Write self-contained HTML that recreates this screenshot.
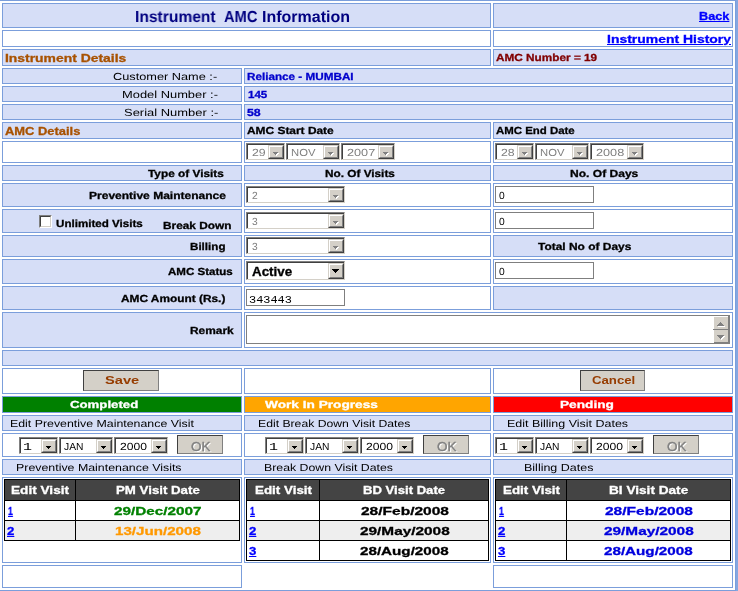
<!DOCTYPE html>
<html><head><meta charset="utf-8"><style>
html,body{margin:0;padding:0;background:#fff}
body{width:738px;height:591px;overflow:hidden;position:relative;font-family:"Liberation Sans",sans-serif}
.a{position:absolute;box-sizing:border-box}
.t{position:absolute;white-space:nowrap;line-height:0;height:0;transform-origin:0 0;will-change:transform}
.t span{display:inline-block;line-height:0}
</style></head><body>
<div class="a" style="left:0;top:0;width:738px;height:1px;background:#7b9edb"></div>
<div class="a" style="left:0;top:590px;width:738px;height:1px;background:#7b9edb"></div>
<div class="a" style="left:735px;top:0;width:1px;height:591px;background:#7b9edb"></div>
<div class="a" style="left:736px;top:0;width:2px;height:591px;background:#85a7e1"></div>
<div class="a" style="left:2px;top:3px;width:489px;height:25px;background:#d6def7;border:1px solid #7b9edb"></div>
<div class="a" style="left:493px;top:3px;width:240px;height:25px;background:#d6def7;border:1px solid #7b9edb"></div>
<div class="a" style="left:2px;top:30px;width:489px;height:17px;background:#ffffff;border:1px solid #7b9edb"></div>
<div class="a" style="left:493px;top:30px;width:240px;height:17px;background:#ffffff;border:1px solid #7b9edb"></div>
<div class="a" style="left:2px;top:49px;width:489px;height:17px;background:#d6def7;border:1px solid #7b9edb"></div>
<div class="a" style="left:493px;top:49px;width:240px;height:17px;background:#d6def7;border:1px solid #7b9edb"></div>
<div class="a" style="left:2px;top:68px;width:240px;height:16px;background:#d6def7;border:1px solid #7b9edb"></div>
<div class="a" style="left:244px;top:68px;width:489px;height:16px;background:#d6def7;border:1px solid #7b9edb"></div>
<div class="a" style="left:2px;top:86px;width:240px;height:16px;background:#d6def7;border:1px solid #7b9edb"></div>
<div class="a" style="left:244px;top:86px;width:489px;height:16px;background:#d6def7;border:1px solid #7b9edb"></div>
<div class="a" style="left:2px;top:104px;width:240px;height:16px;background:#d6def7;border:1px solid #7b9edb"></div>
<div class="a" style="left:244px;top:104px;width:489px;height:16px;background:#d6def7;border:1px solid #7b9edb"></div>
<div class="a" style="left:2px;top:122px;width:240px;height:17px;background:#d6def7;border:1px solid #7b9edb"></div>
<div class="a" style="left:244px;top:122px;width:247px;height:17px;background:#d6def7;border:1px solid #7b9edb"></div>
<div class="a" style="left:493px;top:122px;width:240px;height:17px;background:#d6def7;border:1px solid #7b9edb"></div>
<div class="a" style="left:2px;top:141px;width:240px;height:22px;background:#ffffff;border:1px solid #7b9edb"></div>
<div class="a" style="left:244px;top:141px;width:247px;height:22px;background:#ffffff;border:1px solid #7b9edb"></div>
<div class="a" style="left:493px;top:141px;width:240px;height:22px;background:#ffffff;border:1px solid #7b9edb"></div>
<div class="a" style="left:2px;top:165px;width:240px;height:16px;background:#d6def7;border:1px solid #7b9edb"></div>
<div class="a" style="left:244px;top:165px;width:247px;height:16px;background:#d6def7;border:1px solid #7b9edb"></div>
<div class="a" style="left:493px;top:165px;width:240px;height:16px;background:#d6def7;border:1px solid #7b9edb"></div>
<div class="a" style="left:2px;top:183px;width:240px;height:24px;background:#d6def7;border:1px solid #7b9edb"></div>
<div class="a" style="left:244px;top:183px;width:247px;height:24px;background:#ffffff;border:1px solid #7b9edb"></div>
<div class="a" style="left:493px;top:183px;width:240px;height:24px;background:#ffffff;border:1px solid #7b9edb"></div>
<div class="a" style="left:2px;top:209px;width:240px;height:24px;background:#d6def7;border:1px solid #7b9edb"></div>
<div class="a" style="left:244px;top:209px;width:247px;height:24px;background:#ffffff;border:1px solid #7b9edb"></div>
<div class="a" style="left:493px;top:209px;width:240px;height:24px;background:#ffffff;border:1px solid #7b9edb"></div>
<div class="a" style="left:2px;top:235px;width:240px;height:22px;background:#d6def7;border:1px solid #7b9edb"></div>
<div class="a" style="left:244px;top:235px;width:247px;height:22px;background:#ffffff;border:1px solid #7b9edb"></div>
<div class="a" style="left:493px;top:235px;width:240px;height:22px;background:#d6def7;border:1px solid #7b9edb"></div>
<div class="a" style="left:2px;top:259px;width:240px;height:25px;background:#d6def7;border:1px solid #7b9edb"></div>
<div class="a" style="left:244px;top:259px;width:247px;height:25px;background:#ffffff;border:1px solid #7b9edb"></div>
<div class="a" style="left:493px;top:259px;width:240px;height:25px;background:#ffffff;border:1px solid #7b9edb"></div>
<div class="a" style="left:2px;top:286px;width:240px;height:24px;background:#d6def7;border:1px solid #7b9edb"></div>
<div class="a" style="left:244px;top:286px;width:247px;height:24px;background:#ffffff;border:1px solid #7b9edb"></div>
<div class="a" style="left:493px;top:286px;width:240px;height:24px;background:#d6def7;border:1px solid #7b9edb"></div>
<div class="a" style="left:2px;top:312px;width:240px;height:36px;background:#d6def7;border:1px solid #7b9edb"></div>
<div class="a" style="left:244px;top:312px;width:489px;height:36px;background:#ffffff;border:1px solid #7b9edb"></div>
<div class="a" style="left:2px;top:350px;width:731px;height:16px;background:#d6def7;border:1px solid #7b9edb"></div>
<div class="a" style="left:2px;top:368px;width:240px;height:26px;background:#ffffff;border:1px solid #7b9edb"></div>
<div class="a" style="left:244px;top:368px;width:247px;height:26px;background:#ffffff;border:1px solid #7b9edb"></div>
<div class="a" style="left:493px;top:368px;width:240px;height:26px;background:#ffffff;border:1px solid #7b9edb"></div>
<div class="a" style="left:2px;top:396px;width:240px;height:17px;background:#008000;border:1px solid #7b9edb"></div>
<div class="a" style="left:244px;top:396px;width:247px;height:17px;background:#ffa500;border:1px solid #7b9edb"></div>
<div class="a" style="left:493px;top:396px;width:240px;height:17px;background:#ff0000;border:1px solid #7b9edb"></div>
<div class="a" style="left:2px;top:415px;width:240px;height:16px;background:#d6def7;border:1px solid #7b9edb"></div>
<div class="a" style="left:244px;top:415px;width:247px;height:16px;background:#d6def7;border:1px solid #7b9edb"></div>
<div class="a" style="left:493px;top:415px;width:240px;height:16px;background:#d6def7;border:1px solid #7b9edb"></div>
<div class="a" style="left:2px;top:433px;width:240px;height:24px;background:#ffffff;border:1px solid #7b9edb"></div>
<div class="a" style="left:244px;top:433px;width:247px;height:24px;background:#ffffff;border:1px solid #7b9edb"></div>
<div class="a" style="left:493px;top:433px;width:240px;height:24px;background:#ffffff;border:1px solid #7b9edb"></div>
<div class="a" style="left:2px;top:459px;width:240px;height:16px;background:#d6def7;border:1px solid #7b9edb"></div>
<div class="a" style="left:244px;top:459px;width:247px;height:16px;background:#d6def7;border:1px solid #7b9edb"></div>
<div class="a" style="left:493px;top:459px;width:240px;height:16px;background:#d6def7;border:1px solid #7b9edb"></div>
<div class="a" style="left:2px;top:477px;width:240px;height:86px;background:#ffffff;border:1px solid #7b9edb"></div>
<div class="a" style="left:244px;top:477px;width:247px;height:86px;background:#ffffff;border:1px solid #7b9edb"></div>
<div class="a" style="left:493px;top:477px;width:240px;height:86px;background:#ffffff;border:1px solid #7b9edb"></div>
<div class="a" style="left:2px;top:565px;width:240px;height:23px;background:#ffffff;border:1px solid #7b9edb"></div>
<div class="a" style="left:493px;top:565px;width:240px;height:23px;background:#ffffff;border:1px solid #7b9edb"></div>
<div class="a" style="left:246px;top:143px;width:39px;height:17px;background:#fff;border-top:1px solid #808080;border-left:1px solid #808080;border-right:1px solid #d4d0c8;border-bottom:1px solid #d4d0c8"></div>
<div class="a" style="left:247px;top:144px;width:37px;height:15px;border-top:1px solid #404040;border-left:1px solid #404040"></div>
<div class="a" style="left:268px;top:145px;width:16px;height:14px;background:#d4d0c8;border-top:1px solid #d4d0c8;border-left:1px solid #d4d0c8;border-right:1px solid #404040;border-bottom:1px solid #404040"></div>
<div class="a" style="left:269px;top:146px;width:14px;height:12px;border-top:1px solid #fff;border-left:1px solid #fff;border-right:1px solid #808080;border-bottom:1px solid #808080"></div>
<div class="a" style="left:274px;top:153px;width:5px;height:1px;background:#fff"></div>
<div class="a" style="left:275px;top:154px;width:3px;height:1px;background:#fff"></div>
<div class="a" style="left:276px;top:155px;width:1px;height:1px;background:#fff"></div>
<div class="a" style="left:273px;top:152px;width:5px;height:1px;background:#808080"></div>
<div class="a" style="left:274px;top:153px;width:3px;height:1px;background:#808080"></div>
<div class="a" style="left:275px;top:154px;width:1px;height:1px;background:#808080"></div>
<div class="a" style="left:286px;top:143px;width:54px;height:17px;background:#fff;border-top:1px solid #808080;border-left:1px solid #808080;border-right:1px solid #d4d0c8;border-bottom:1px solid #d4d0c8"></div>
<div class="a" style="left:287px;top:144px;width:52px;height:15px;border-top:1px solid #404040;border-left:1px solid #404040"></div>
<div class="a" style="left:323px;top:145px;width:16px;height:14px;background:#d4d0c8;border-top:1px solid #d4d0c8;border-left:1px solid #d4d0c8;border-right:1px solid #404040;border-bottom:1px solid #404040"></div>
<div class="a" style="left:324px;top:146px;width:14px;height:12px;border-top:1px solid #fff;border-left:1px solid #fff;border-right:1px solid #808080;border-bottom:1px solid #808080"></div>
<div class="a" style="left:329px;top:153px;width:5px;height:1px;background:#fff"></div>
<div class="a" style="left:330px;top:154px;width:3px;height:1px;background:#fff"></div>
<div class="a" style="left:331px;top:155px;width:1px;height:1px;background:#fff"></div>
<div class="a" style="left:328px;top:152px;width:5px;height:1px;background:#808080"></div>
<div class="a" style="left:329px;top:153px;width:3px;height:1px;background:#808080"></div>
<div class="a" style="left:330px;top:154px;width:1px;height:1px;background:#808080"></div>
<div class="a" style="left:341px;top:143px;width:54px;height:17px;background:#fff;border-top:1px solid #808080;border-left:1px solid #808080;border-right:1px solid #d4d0c8;border-bottom:1px solid #d4d0c8"></div>
<div class="a" style="left:342px;top:144px;width:52px;height:15px;border-top:1px solid #404040;border-left:1px solid #404040"></div>
<div class="a" style="left:378px;top:145px;width:16px;height:14px;background:#d4d0c8;border-top:1px solid #d4d0c8;border-left:1px solid #d4d0c8;border-right:1px solid #404040;border-bottom:1px solid #404040"></div>
<div class="a" style="left:379px;top:146px;width:14px;height:12px;border-top:1px solid #fff;border-left:1px solid #fff;border-right:1px solid #808080;border-bottom:1px solid #808080"></div>
<div class="a" style="left:384px;top:153px;width:5px;height:1px;background:#fff"></div>
<div class="a" style="left:385px;top:154px;width:3px;height:1px;background:#fff"></div>
<div class="a" style="left:386px;top:155px;width:1px;height:1px;background:#fff"></div>
<div class="a" style="left:383px;top:152px;width:5px;height:1px;background:#808080"></div>
<div class="a" style="left:384px;top:153px;width:3px;height:1px;background:#808080"></div>
<div class="a" style="left:385px;top:154px;width:1px;height:1px;background:#808080"></div>
<div class="a" style="left:495px;top:143px;width:39px;height:17px;background:#fff;border-top:1px solid #808080;border-left:1px solid #808080;border-right:1px solid #d4d0c8;border-bottom:1px solid #d4d0c8"></div>
<div class="a" style="left:496px;top:144px;width:37px;height:15px;border-top:1px solid #404040;border-left:1px solid #404040"></div>
<div class="a" style="left:517px;top:145px;width:16px;height:14px;background:#d4d0c8;border-top:1px solid #d4d0c8;border-left:1px solid #d4d0c8;border-right:1px solid #404040;border-bottom:1px solid #404040"></div>
<div class="a" style="left:518px;top:146px;width:14px;height:12px;border-top:1px solid #fff;border-left:1px solid #fff;border-right:1px solid #808080;border-bottom:1px solid #808080"></div>
<div class="a" style="left:523px;top:153px;width:5px;height:1px;background:#fff"></div>
<div class="a" style="left:524px;top:154px;width:3px;height:1px;background:#fff"></div>
<div class="a" style="left:525px;top:155px;width:1px;height:1px;background:#fff"></div>
<div class="a" style="left:522px;top:152px;width:5px;height:1px;background:#808080"></div>
<div class="a" style="left:523px;top:153px;width:3px;height:1px;background:#808080"></div>
<div class="a" style="left:524px;top:154px;width:1px;height:1px;background:#808080"></div>
<div class="a" style="left:535px;top:143px;width:54px;height:17px;background:#fff;border-top:1px solid #808080;border-left:1px solid #808080;border-right:1px solid #d4d0c8;border-bottom:1px solid #d4d0c8"></div>
<div class="a" style="left:536px;top:144px;width:52px;height:15px;border-top:1px solid #404040;border-left:1px solid #404040"></div>
<div class="a" style="left:572px;top:145px;width:16px;height:14px;background:#d4d0c8;border-top:1px solid #d4d0c8;border-left:1px solid #d4d0c8;border-right:1px solid #404040;border-bottom:1px solid #404040"></div>
<div class="a" style="left:573px;top:146px;width:14px;height:12px;border-top:1px solid #fff;border-left:1px solid #fff;border-right:1px solid #808080;border-bottom:1px solid #808080"></div>
<div class="a" style="left:578px;top:153px;width:5px;height:1px;background:#fff"></div>
<div class="a" style="left:579px;top:154px;width:3px;height:1px;background:#fff"></div>
<div class="a" style="left:580px;top:155px;width:1px;height:1px;background:#fff"></div>
<div class="a" style="left:577px;top:152px;width:5px;height:1px;background:#808080"></div>
<div class="a" style="left:578px;top:153px;width:3px;height:1px;background:#808080"></div>
<div class="a" style="left:579px;top:154px;width:1px;height:1px;background:#808080"></div>
<div class="a" style="left:590px;top:143px;width:54px;height:17px;background:#fff;border-top:1px solid #808080;border-left:1px solid #808080;border-right:1px solid #d4d0c8;border-bottom:1px solid #d4d0c8"></div>
<div class="a" style="left:591px;top:144px;width:52px;height:15px;border-top:1px solid #404040;border-left:1px solid #404040"></div>
<div class="a" style="left:627px;top:145px;width:16px;height:14px;background:#d4d0c8;border-top:1px solid #d4d0c8;border-left:1px solid #d4d0c8;border-right:1px solid #404040;border-bottom:1px solid #404040"></div>
<div class="a" style="left:628px;top:146px;width:14px;height:12px;border-top:1px solid #fff;border-left:1px solid #fff;border-right:1px solid #808080;border-bottom:1px solid #808080"></div>
<div class="a" style="left:633px;top:153px;width:5px;height:1px;background:#fff"></div>
<div class="a" style="left:634px;top:154px;width:3px;height:1px;background:#fff"></div>
<div class="a" style="left:635px;top:155px;width:1px;height:1px;background:#fff"></div>
<div class="a" style="left:632px;top:152px;width:5px;height:1px;background:#808080"></div>
<div class="a" style="left:633px;top:153px;width:3px;height:1px;background:#808080"></div>
<div class="a" style="left:634px;top:154px;width:1px;height:1px;background:#808080"></div>
<div class="a" style="left:246px;top:186px;width:99px;height:17px;background:#fff;border-top:1px solid #808080;border-left:1px solid #808080;border-right:1px solid #d4d0c8;border-bottom:1px solid #d4d0c8"></div>
<div class="a" style="left:247px;top:187px;width:97px;height:15px;border-top:1px solid #404040;border-left:1px solid #404040"></div>
<div class="a" style="left:328px;top:188px;width:16px;height:14px;background:#d4d0c8;border-top:1px solid #d4d0c8;border-left:1px solid #d4d0c8;border-right:1px solid #404040;border-bottom:1px solid #404040"></div>
<div class="a" style="left:329px;top:189px;width:14px;height:12px;border-top:1px solid #fff;border-left:1px solid #fff;border-right:1px solid #808080;border-bottom:1px solid #808080"></div>
<div class="a" style="left:334px;top:196px;width:5px;height:1px;background:#fff"></div>
<div class="a" style="left:335px;top:197px;width:3px;height:1px;background:#fff"></div>
<div class="a" style="left:336px;top:198px;width:1px;height:1px;background:#fff"></div>
<div class="a" style="left:333px;top:195px;width:5px;height:1px;background:#808080"></div>
<div class="a" style="left:334px;top:196px;width:3px;height:1px;background:#808080"></div>
<div class="a" style="left:335px;top:197px;width:1px;height:1px;background:#808080"></div>
<div class="a" style="left:246px;top:212px;width:99px;height:17px;background:#fff;border-top:1px solid #808080;border-left:1px solid #808080;border-right:1px solid #d4d0c8;border-bottom:1px solid #d4d0c8"></div>
<div class="a" style="left:247px;top:213px;width:97px;height:15px;border-top:1px solid #404040;border-left:1px solid #404040"></div>
<div class="a" style="left:328px;top:214px;width:16px;height:14px;background:#d4d0c8;border-top:1px solid #d4d0c8;border-left:1px solid #d4d0c8;border-right:1px solid #404040;border-bottom:1px solid #404040"></div>
<div class="a" style="left:329px;top:215px;width:14px;height:12px;border-top:1px solid #fff;border-left:1px solid #fff;border-right:1px solid #808080;border-bottom:1px solid #808080"></div>
<div class="a" style="left:334px;top:222px;width:5px;height:1px;background:#fff"></div>
<div class="a" style="left:335px;top:223px;width:3px;height:1px;background:#fff"></div>
<div class="a" style="left:336px;top:224px;width:1px;height:1px;background:#fff"></div>
<div class="a" style="left:333px;top:221px;width:5px;height:1px;background:#808080"></div>
<div class="a" style="left:334px;top:222px;width:3px;height:1px;background:#808080"></div>
<div class="a" style="left:335px;top:223px;width:1px;height:1px;background:#808080"></div>
<div class="a" style="left:246px;top:237px;width:99px;height:17px;background:#fff;border-top:1px solid #808080;border-left:1px solid #808080;border-right:1px solid #d4d0c8;border-bottom:1px solid #d4d0c8"></div>
<div class="a" style="left:247px;top:238px;width:97px;height:15px;border-top:1px solid #404040;border-left:1px solid #404040"></div>
<div class="a" style="left:328px;top:239px;width:16px;height:14px;background:#d4d0c8;border-top:1px solid #d4d0c8;border-left:1px solid #d4d0c8;border-right:1px solid #404040;border-bottom:1px solid #404040"></div>
<div class="a" style="left:329px;top:240px;width:14px;height:12px;border-top:1px solid #fff;border-left:1px solid #fff;border-right:1px solid #808080;border-bottom:1px solid #808080"></div>
<div class="a" style="left:334px;top:247px;width:5px;height:1px;background:#fff"></div>
<div class="a" style="left:335px;top:248px;width:3px;height:1px;background:#fff"></div>
<div class="a" style="left:336px;top:249px;width:1px;height:1px;background:#fff"></div>
<div class="a" style="left:333px;top:246px;width:5px;height:1px;background:#808080"></div>
<div class="a" style="left:334px;top:247px;width:3px;height:1px;background:#808080"></div>
<div class="a" style="left:335px;top:248px;width:1px;height:1px;background:#808080"></div>
<div class="a" style="left:495px;top:186px;width:99px;height:17px;background:#fff;border:1px solid #7f7f7f"></div>
<div class="a" style="left:495px;top:212px;width:99px;height:17px;background:#fff;border:1px solid #7f7f7f"></div>
<div class="a" style="left:39px;top:215px;width:13px;height:13px;background:#fff;border-top:1px solid #808080;border-left:1px solid #808080;border-right:1px solid #fff;border-bottom:1px solid #fff"></div>
<div class="a" style="left:40px;top:216px;width:11px;height:11px;border-top:1px solid #404040;border-left:1px solid #404040;border-right:1px solid #d4d0c8;border-bottom:1px solid #d4d0c8"></div>
<div class="a" style="left:246px;top:261px;width:99px;height:19px;background:#fff;border-top:1px solid #808080;border-left:1px solid #808080;border-right:1px solid #d4d0c8;border-bottom:1px solid #d4d0c8"></div>
<div class="a" style="left:247px;top:262px;width:97px;height:17px;border-top:1px solid #404040;border-left:1px solid #404040"></div>
<div class="a" style="left:328px;top:263px;width:16px;height:16px;background:#d4d0c8;border-top:1px solid #d4d0c8;border-left:1px solid #d4d0c8;border-right:1px solid #404040;border-bottom:1px solid #404040"></div>
<div class="a" style="left:329px;top:264px;width:14px;height:14px;border-top:1px solid #fff;border-left:1px solid #fff;border-right:1px solid #808080;border-bottom:1px solid #808080"></div>
<div class="a" style="left:332px;top:269px;width:7px;height:1px;background:#000"></div>
<div class="a" style="left:333px;top:270px;width:5px;height:1px;background:#000"></div>
<div class="a" style="left:334px;top:271px;width:3px;height:1px;background:#000"></div>
<div class="a" style="left:335px;top:272px;width:1px;height:1px;background:#000"></div>
<div class="a" style="left:495px;top:262px;width:99px;height:17px;background:#fff;border:1px solid #7f7f7f"></div>
<div class="a" style="left:246px;top:289px;width:99px;height:17px;background:#fff;border:1px solid #7f7f7f"></div>
<div class="a" style="left:246px;top:315px;width:484px;height:29px;background:#fff;border-top:1px solid #808080;border-left:1px solid #808080;border-right:1px solid #808080;border-bottom:1px solid #808080"></div>
<div class="a" style="left:714px;top:317px;width:14px;height:12px;background:#d4d0c8"></div>
<div class="a" style="left:714px;top:330px;width:14px;height:12px;background:#d4d0c8"></div>
<div class="a" style="left:713px;top:329px;width:16px;height:1px;background:#808080"></div>
<div class="a" style="left:728px;top:316px;width:1px;height:27px;background:#808080"></div>
<div class="a" style="left:714px;top:342px;width:15px;height:1px;background:#808080"></div>
<div class="a" style="left:720px;top:322px;width:1px;height:1px;background:#808080"></div>
<div class="a" style="left:719px;top:323px;width:3px;height:1px;background:#808080"></div>
<div class="a" style="left:718px;top:324px;width:5px;height:1px;background:#808080"></div>
<div class="a" style="left:717px;top:325px;width:7px;height:1px;background:#808080"></div>
<div class="a" style="left:718px;top:326px;width:7px;height:1px;background:#fff"></div>
<div class="a" style="left:718px;top:336px;width:7px;height:1px;background:#fff"></div>
<div class="a" style="left:719px;top:337px;width:5px;height:1px;background:#fff"></div>
<div class="a" style="left:720px;top:338px;width:3px;height:1px;background:#fff"></div>
<div class="a" style="left:721px;top:339px;width:1px;height:1px;background:#fff"></div>
<div class="a" style="left:717px;top:335px;width:7px;height:1px;background:#808080"></div>
<div class="a" style="left:718px;top:336px;width:5px;height:1px;background:#808080"></div>
<div class="a" style="left:719px;top:337px;width:3px;height:1px;background:#808080"></div>
<div class="a" style="left:720px;top:338px;width:1px;height:1px;background:#808080"></div>
<div class="a" style="left:83px;top:370px;width:76px;height:21px;background:#d4d0c8;border-top:1px solid #404040;border-left:1px solid #404040;border-right:1px solid #808080;border-bottom:1px solid #808080"></div>
<div class="a" style="left:580px;top:370px;width:65px;height:21px;background:#d4d0c8;border-top:1px solid #404040;border-left:1px solid #404040;border-right:1px solid #808080;border-bottom:1px solid #808080"></div>
<div class="a" style="left:19px;top:437px;width:39px;height:17px;background:#fff;border-top:1px solid #808080;border-left:1px solid #808080;border-right:1px solid #d4d0c8;border-bottom:1px solid #d4d0c8"></div>
<div class="a" style="left:20px;top:438px;width:37px;height:15px;border-top:1px solid #404040;border-left:1px solid #404040"></div>
<div class="a" style="left:41px;top:439px;width:16px;height:14px;background:#d4d0c8;border-top:1px solid #d4d0c8;border-left:1px solid #d4d0c8;border-right:1px solid #404040;border-bottom:1px solid #404040"></div>
<div class="a" style="left:42px;top:440px;width:14px;height:12px;border-top:1px solid #fff;border-left:1px solid #fff;border-right:1px solid #808080;border-bottom:1px solid #808080"></div>
<div class="a" style="left:46px;top:446px;width:5px;height:1px;background:#000"></div>
<div class="a" style="left:47px;top:447px;width:3px;height:1px;background:#000"></div>
<div class="a" style="left:48px;top:448px;width:1px;height:1px;background:#000"></div>
<div class="a" style="left:59px;top:437px;width:54px;height:17px;background:#fff;border-top:1px solid #808080;border-left:1px solid #808080;border-right:1px solid #d4d0c8;border-bottom:1px solid #d4d0c8"></div>
<div class="a" style="left:60px;top:438px;width:52px;height:15px;border-top:1px solid #404040;border-left:1px solid #404040"></div>
<div class="a" style="left:96px;top:439px;width:16px;height:14px;background:#d4d0c8;border-top:1px solid #d4d0c8;border-left:1px solid #d4d0c8;border-right:1px solid #404040;border-bottom:1px solid #404040"></div>
<div class="a" style="left:97px;top:440px;width:14px;height:12px;border-top:1px solid #fff;border-left:1px solid #fff;border-right:1px solid #808080;border-bottom:1px solid #808080"></div>
<div class="a" style="left:101px;top:446px;width:5px;height:1px;background:#000"></div>
<div class="a" style="left:102px;top:447px;width:3px;height:1px;background:#000"></div>
<div class="a" style="left:103px;top:448px;width:1px;height:1px;background:#000"></div>
<div class="a" style="left:114px;top:437px;width:54px;height:17px;background:#fff;border-top:1px solid #808080;border-left:1px solid #808080;border-right:1px solid #d4d0c8;border-bottom:1px solid #d4d0c8"></div>
<div class="a" style="left:115px;top:438px;width:52px;height:15px;border-top:1px solid #404040;border-left:1px solid #404040"></div>
<div class="a" style="left:151px;top:439px;width:16px;height:14px;background:#d4d0c8;border-top:1px solid #d4d0c8;border-left:1px solid #d4d0c8;border-right:1px solid #404040;border-bottom:1px solid #404040"></div>
<div class="a" style="left:152px;top:440px;width:14px;height:12px;border-top:1px solid #fff;border-left:1px solid #fff;border-right:1px solid #808080;border-bottom:1px solid #808080"></div>
<div class="a" style="left:156px;top:446px;width:5px;height:1px;background:#000"></div>
<div class="a" style="left:157px;top:447px;width:3px;height:1px;background:#000"></div>
<div class="a" style="left:158px;top:448px;width:1px;height:1px;background:#000"></div>
<div class="a" style="left:177px;top:435px;width:46px;height:19px;background:#d4d0c8;border-top:1px solid #404040;border-left:1px solid #404040;border-right:1px solid #808080;border-bottom:1px solid #808080"></div>
<div class="a" style="left:265px;top:437px;width:39px;height:17px;background:#fff;border-top:1px solid #808080;border-left:1px solid #808080;border-right:1px solid #d4d0c8;border-bottom:1px solid #d4d0c8"></div>
<div class="a" style="left:266px;top:438px;width:37px;height:15px;border-top:1px solid #404040;border-left:1px solid #404040"></div>
<div class="a" style="left:287px;top:439px;width:16px;height:14px;background:#d4d0c8;border-top:1px solid #d4d0c8;border-left:1px solid #d4d0c8;border-right:1px solid #404040;border-bottom:1px solid #404040"></div>
<div class="a" style="left:288px;top:440px;width:14px;height:12px;border-top:1px solid #fff;border-left:1px solid #fff;border-right:1px solid #808080;border-bottom:1px solid #808080"></div>
<div class="a" style="left:292px;top:446px;width:5px;height:1px;background:#000"></div>
<div class="a" style="left:293px;top:447px;width:3px;height:1px;background:#000"></div>
<div class="a" style="left:294px;top:448px;width:1px;height:1px;background:#000"></div>
<div class="a" style="left:305px;top:437px;width:54px;height:17px;background:#fff;border-top:1px solid #808080;border-left:1px solid #808080;border-right:1px solid #d4d0c8;border-bottom:1px solid #d4d0c8"></div>
<div class="a" style="left:306px;top:438px;width:52px;height:15px;border-top:1px solid #404040;border-left:1px solid #404040"></div>
<div class="a" style="left:342px;top:439px;width:16px;height:14px;background:#d4d0c8;border-top:1px solid #d4d0c8;border-left:1px solid #d4d0c8;border-right:1px solid #404040;border-bottom:1px solid #404040"></div>
<div class="a" style="left:343px;top:440px;width:14px;height:12px;border-top:1px solid #fff;border-left:1px solid #fff;border-right:1px solid #808080;border-bottom:1px solid #808080"></div>
<div class="a" style="left:347px;top:446px;width:5px;height:1px;background:#000"></div>
<div class="a" style="left:348px;top:447px;width:3px;height:1px;background:#000"></div>
<div class="a" style="left:349px;top:448px;width:1px;height:1px;background:#000"></div>
<div class="a" style="left:360px;top:437px;width:54px;height:17px;background:#fff;border-top:1px solid #808080;border-left:1px solid #808080;border-right:1px solid #d4d0c8;border-bottom:1px solid #d4d0c8"></div>
<div class="a" style="left:361px;top:438px;width:52px;height:15px;border-top:1px solid #404040;border-left:1px solid #404040"></div>
<div class="a" style="left:397px;top:439px;width:16px;height:14px;background:#d4d0c8;border-top:1px solid #d4d0c8;border-left:1px solid #d4d0c8;border-right:1px solid #404040;border-bottom:1px solid #404040"></div>
<div class="a" style="left:398px;top:440px;width:14px;height:12px;border-top:1px solid #fff;border-left:1px solid #fff;border-right:1px solid #808080;border-bottom:1px solid #808080"></div>
<div class="a" style="left:402px;top:446px;width:5px;height:1px;background:#000"></div>
<div class="a" style="left:403px;top:447px;width:3px;height:1px;background:#000"></div>
<div class="a" style="left:404px;top:448px;width:1px;height:1px;background:#000"></div>
<div class="a" style="left:423px;top:435px;width:46px;height:19px;background:#d4d0c8;border-top:1px solid #404040;border-left:1px solid #404040;border-right:1px solid #808080;border-bottom:1px solid #808080"></div>
<div class="a" style="left:495px;top:437px;width:39px;height:17px;background:#fff;border-top:1px solid #808080;border-left:1px solid #808080;border-right:1px solid #d4d0c8;border-bottom:1px solid #d4d0c8"></div>
<div class="a" style="left:496px;top:438px;width:37px;height:15px;border-top:1px solid #404040;border-left:1px solid #404040"></div>
<div class="a" style="left:517px;top:439px;width:16px;height:14px;background:#d4d0c8;border-top:1px solid #d4d0c8;border-left:1px solid #d4d0c8;border-right:1px solid #404040;border-bottom:1px solid #404040"></div>
<div class="a" style="left:518px;top:440px;width:14px;height:12px;border-top:1px solid #fff;border-left:1px solid #fff;border-right:1px solid #808080;border-bottom:1px solid #808080"></div>
<div class="a" style="left:522px;top:446px;width:5px;height:1px;background:#000"></div>
<div class="a" style="left:523px;top:447px;width:3px;height:1px;background:#000"></div>
<div class="a" style="left:524px;top:448px;width:1px;height:1px;background:#000"></div>
<div class="a" style="left:535px;top:437px;width:54px;height:17px;background:#fff;border-top:1px solid #808080;border-left:1px solid #808080;border-right:1px solid #d4d0c8;border-bottom:1px solid #d4d0c8"></div>
<div class="a" style="left:536px;top:438px;width:52px;height:15px;border-top:1px solid #404040;border-left:1px solid #404040"></div>
<div class="a" style="left:572px;top:439px;width:16px;height:14px;background:#d4d0c8;border-top:1px solid #d4d0c8;border-left:1px solid #d4d0c8;border-right:1px solid #404040;border-bottom:1px solid #404040"></div>
<div class="a" style="left:573px;top:440px;width:14px;height:12px;border-top:1px solid #fff;border-left:1px solid #fff;border-right:1px solid #808080;border-bottom:1px solid #808080"></div>
<div class="a" style="left:577px;top:446px;width:5px;height:1px;background:#000"></div>
<div class="a" style="left:578px;top:447px;width:3px;height:1px;background:#000"></div>
<div class="a" style="left:579px;top:448px;width:1px;height:1px;background:#000"></div>
<div class="a" style="left:590px;top:437px;width:54px;height:17px;background:#fff;border-top:1px solid #808080;border-left:1px solid #808080;border-right:1px solid #d4d0c8;border-bottom:1px solid #d4d0c8"></div>
<div class="a" style="left:591px;top:438px;width:52px;height:15px;border-top:1px solid #404040;border-left:1px solid #404040"></div>
<div class="a" style="left:627px;top:439px;width:16px;height:14px;background:#d4d0c8;border-top:1px solid #d4d0c8;border-left:1px solid #d4d0c8;border-right:1px solid #404040;border-bottom:1px solid #404040"></div>
<div class="a" style="left:628px;top:440px;width:14px;height:12px;border-top:1px solid #fff;border-left:1px solid #fff;border-right:1px solid #808080;border-bottom:1px solid #808080"></div>
<div class="a" style="left:632px;top:446px;width:5px;height:1px;background:#000"></div>
<div class="a" style="left:633px;top:447px;width:3px;height:1px;background:#000"></div>
<div class="a" style="left:634px;top:448px;width:1px;height:1px;background:#000"></div>
<div class="a" style="left:653px;top:435px;width:46px;height:19px;background:#d4d0c8;border-top:1px solid #404040;border-left:1px solid #404040;border-right:1px solid #808080;border-bottom:1px solid #808080"></div>
<div class="a" style="left:4px;top:479px;width:236px;height:62px;background:#000"></div>
<div class="a" style="left:5px;top:480px;width:234px;height:20px;background:#444"></div>
<div class="a" style="left:5px;top:501px;width:234px;height:19px;background:#fff"></div>
<div class="a" style="left:5px;top:521px;width:234px;height:19px;background:#eeeeee"></div>
<div class="a" style="left:75px;top:480px;width:1px;height:60px;background:#000"></div>
<div class="a" style="left:246px;top:479px;width:243px;height:82px;background:#000"></div>
<div class="a" style="left:247px;top:480px;width:241px;height:20px;background:#444"></div>
<div class="a" style="left:247px;top:501px;width:241px;height:19px;background:#fff"></div>
<div class="a" style="left:247px;top:521px;width:241px;height:19px;background:#eeeeee"></div>
<div class="a" style="left:247px;top:541px;width:241px;height:19px;background:#fff"></div>
<div class="a" style="left:319px;top:480px;width:1px;height:80px;background:#000"></div>
<div class="a" style="left:495px;top:479px;width:236px;height:82px;background:#000"></div>
<div class="a" style="left:496px;top:480px;width:234px;height:20px;background:#444"></div>
<div class="a" style="left:496px;top:501px;width:234px;height:19px;background:#fff"></div>
<div class="a" style="left:496px;top:521px;width:234px;height:19px;background:#eeeeee"></div>
<div class="a" style="left:496px;top:541px;width:234px;height:19px;background:#fff"></div>
<div class="a" style="left:566px;top:480px;width:1px;height:80px;background:#000"></div>
<div class="t" style="left:135.02px;top:18px;font-size:16px;font-weight:bold;font-family:'Liberation Sans';color:#000080;text-rendering:geometricPrecision;transform:scaleX(0.9753);"><span>Instrument</span></div>
<div class="t" style="left:224.00px;top:18px;font-size:16px;font-weight:bold;font-family:'Liberation Sans';color:#000080;text-rendering:geometricPrecision;transform:scaleX(0.9143);"><span>AMC</span></div>
<div class="t" style="left:262.00px;top:18px;font-size:16px;font-weight:bold;font-family:'Liberation Sans';color:#000080;text-rendering:geometricPrecision;"><span>Information</span></div>
<div class="t" style="left:699.00px;top:16px;font-size:11px;font-weight:bold;font-family:'Liberation Sans';color:#0000ff;-webkit-text-stroke:0.3px #0000ff;transform:scaleX(1.1538);"><span style="text-decoration:underline">Back</span></div>
<div class="t" style="left:607.00px;top:39px;font-size:11px;font-weight:bold;font-family:'Liberation Sans';color:#0000ff;-webkit-text-stroke:0.3px #0000ff;transform:scaleX(1.2680);"><span style="text-decoration:underline">Instrument History</span></div>
<div class="t" style="left:5.00px;top:58px;font-size:11px;font-weight:bold;font-family:'Liberation Sans';color:#a85200;-webkit-text-stroke:0.3px #a85200;transform:scaleX(1.2632);"><span>Instrument Details</span></div>
<div class="t" style="left:496.00px;top:59px;font-size:10.25px;font-weight:bold;font-family:'Liberation Sans';color:#800000;text-rendering:geometricPrecision;-webkit-text-stroke:0.3px #800000;transform:scaleX(1.1494);"><span>AMC Number = 19</span></div>
<div class="t" style="left:113.00px;top:78px;font-size:10.25px;font-weight:normal;font-family:'Liberation Sans';color:#000;text-rendering:geometricPrecision;transform:scaleX(1.2439);"><span>Customer Name :-</span></div>
<div class="t" style="left:121.74px;top:96px;font-size:10.25px;font-weight:normal;font-family:'Liberation Sans';color:#000;text-rendering:geometricPrecision;transform:scaleX(1.2568);"><span>Model Number :-</span></div>
<div class="t" style="left:123.74px;top:114px;font-size:10.25px;font-weight:normal;font-family:'Liberation Sans';color:#000;text-rendering:geometricPrecision;transform:scaleX(1.2639);"><span>Serial Number :-</span></div>
<div class="t" style="left:247.00px;top:78px;font-size:10.25px;font-weight:bold;font-family:'Liberation Sans';color:#0000cc;text-rendering:geometricPrecision;-webkit-text-stroke:0.3px #0000cc;transform:scaleX(1.1413);"><span>Reliance - MUMBAI</span></div>
<div class="t" style="left:248.00px;top:96px;font-size:10.25px;font-weight:bold;font-family:'Liberation Sans';color:#0000cc;text-rendering:geometricPrecision;-webkit-text-stroke:0.3px #0000cc;transform:scaleX(1.1250);"><span>145</span></div>
<div class="t" style="left:247.00px;top:114px;font-size:10.25px;font-weight:bold;font-family:'Liberation Sans';color:#0000cc;text-rendering:geometricPrecision;-webkit-text-stroke:0.3px #0000cc;transform:scaleX(1.2000);"><span>58</span></div>
<div class="t" style="left:5.00px;top:131px;font-size:11px;font-weight:bold;font-family:'Liberation Sans';color:#a85200;-webkit-text-stroke:0.3px #a85200;transform:scaleX(1.1746);"><span>AMC Details</span></div>
<div class="t" style="left:247.00px;top:132px;font-size:10.25px;font-weight:bold;font-family:'Liberation Sans';color:#000;text-rendering:geometricPrecision;-webkit-text-stroke:0.3px #000;transform:scaleX(1.1622);"><span>AMC Start Date</span></div>
<div class="t" style="left:496.00px;top:132px;font-size:10.25px;font-weight:bold;font-family:'Liberation Sans';color:#000;text-rendering:geometricPrecision;-webkit-text-stroke:0.3px #000;transform:scaleX(1.1143);"><span>AMC End Date</span></div>
<div class="t" style="left:148.00px;top:175px;font-size:10.25px;font-weight:bold;font-family:'Liberation Sans';color:#000;text-rendering:geometricPrecision;-webkit-text-stroke:0.3px #000;transform:scaleX(1.1538);"><span>Type of Visits</span></div>
<div class="t" style="left:325.00px;top:175px;font-size:10.25px;font-weight:bold;font-family:'Liberation Sans';color:#000;text-rendering:geometricPrecision;-webkit-text-stroke:0.3px #000;transform:scaleX(1.1500);"><span>No. Of Visits</span></div>
<div class="t" style="left:570.00px;top:175px;font-size:10.25px;font-weight:bold;font-family:'Liberation Sans';color:#000;text-rendering:geometricPrecision;-webkit-text-stroke:0.3px #000;transform:scaleX(1.1754);"><span>No. Of Days</span></div>
<div class="t" style="left:89.00px;top:197px;font-size:10.25px;font-weight:bold;font-family:'Liberation Sans';color:#000;text-rendering:geometricPrecision;-webkit-text-stroke:0.3px #000;transform:scaleX(1.1724);"><span>Preventive Maintenance</span></div>
<div class="t" style="left:56.00px;top:225px;font-size:10.25px;font-weight:bold;font-family:'Liberation Sans';color:#000;text-rendering:geometricPrecision;-webkit-text-stroke:0.3px #000;transform:scaleX(1.1316);"><span>Unlimited Visits</span></div>
<div class="t" style="left:163.00px;top:227px;font-size:10.25px;font-weight:bold;font-family:'Liberation Sans';color:#000;text-rendering:geometricPrecision;-webkit-text-stroke:0.3px #000;transform:scaleX(1.1552);"><span>Break Down</span></div>
<div class="t" style="left:190.00px;top:248px;font-size:10.25px;font-weight:bold;font-family:'Liberation Sans';color:#000;text-rendering:geometricPrecision;-webkit-text-stroke:0.3px #000;transform:scaleX(1.1333);"><span>Billing</span></div>
<div class="t" style="left:538.00px;top:248px;font-size:10.25px;font-weight:bold;font-family:'Liberation Sans';color:#000;text-rendering:geometricPrecision;-webkit-text-stroke:0.3px #000;transform:scaleX(1.1646);"><span>Total No of Days</span></div>
<div class="t" style="left:168.00px;top:273px;font-size:10.25px;font-weight:bold;font-family:'Liberation Sans';color:#000;text-rendering:geometricPrecision;-webkit-text-stroke:0.3px #000;transform:scaleX(1.1250);"><span>AMC Status</span></div>
<div class="t" style="left:121.00px;top:300px;font-size:10.25px;font-weight:bold;font-family:'Liberation Sans';color:#000;text-rendering:geometricPrecision;-webkit-text-stroke:0.3px #000;transform:scaleX(1.1573);"><span>AMC Amount (Rs.)</span></div>
<div class="t" style="left:190.00px;top:332px;font-size:10.25px;font-weight:bold;font-family:'Liberation Sans';color:#000;text-rendering:geometricPrecision;-webkit-text-stroke:0.3px #000;transform:scaleX(1.1622);"><span>Remark</span></div>
<div class="t" style="left:105.00px;top:380px;font-size:11px;font-weight:bold;font-family:'Liberation Sans';color:#963c00;transform:scaleX(1.3333);"><span>Save</span></div>
<div class="t" style="left:592.00px;top:380px;font-size:11px;font-weight:bold;font-family:'Liberation Sans';color:#963c00;transform:scaleX(1.2000);"><span>Cancel</span></div>
<div class="t" style="left:70.00px;top:406px;font-size:10.25px;font-weight:bold;font-family:'Liberation Sans';color:#fff;text-rendering:geometricPrecision;-webkit-text-stroke:0.3px #fff;transform:scaleX(1.2885);"><span>Completed</span></div>
<div class="t" style="left:265.00px;top:406px;font-size:10.25px;font-weight:bold;font-family:'Liberation Sans';color:#fff;text-rendering:geometricPrecision;-webkit-text-stroke:0.3px #fff;transform:scaleX(1.3333);"><span>Work In Progress</span></div>
<div class="t" style="left:560.00px;top:406px;font-size:10.25px;font-weight:bold;font-family:'Liberation Sans';color:#fff;text-rendering:geometricPrecision;-webkit-text-stroke:0.3px #fff;transform:scaleX(1.3333);"><span>Pending</span></div>
<div class="t" style="left:9.79px;top:425px;font-size:10.25px;font-weight:normal;font-family:'Liberation Sans';color:#000;text-rendering:geometricPrecision;transform:scaleX(1.2053);"><span>Edit Preventive Maintenance Visit</span></div>
<div class="t" style="left:257.81px;top:425px;font-size:10.25px;font-weight:normal;font-family:'Liberation Sans';color:#000;text-rendering:geometricPrecision;transform:scaleX(1.1905);"><span>Edit Break Down Visit Dates</span></div>
<div class="t" style="left:506.78px;top:425px;font-size:10.25px;font-weight:normal;font-family:'Liberation Sans';color:#000;text-rendering:geometricPrecision;transform:scaleX(1.2165);"><span>Edit Billing Visit Dates</span></div>
<div class="t" style="left:15.79px;top:469px;font-size:10.25px;font-weight:normal;font-family:'Liberation Sans';color:#000;text-rendering:geometricPrecision;transform:scaleX(1.2074);"><span>Preventive Maintenance Visits</span></div>
<div class="t" style="left:263.80px;top:469px;font-size:10.25px;font-weight:normal;font-family:'Liberation Sans';color:#000;text-rendering:geometricPrecision;transform:scaleX(1.2000);"><span>Break Down Visit Dates</span></div>
<div class="t" style="left:523.78px;top:469px;font-size:10.25px;font-weight:normal;font-family:'Liberation Sans';color:#000;text-rendering:geometricPrecision;transform:scaleX(1.2182);"><span>Billing Dates</span></div>
<div class="t" style="left:252.00px;top:154px;font-size:10.25px;font-weight:normal;font-family:'Liberation Sans';color:#808080;text-rendering:geometricPrecision;transform:scaleX(1.2000);"><span>29</span></div>
<div class="t" style="left:290.90px;top:154px;font-size:10.25px;font-weight:normal;font-family:'Liberation Sans';color:#808080;text-rendering:geometricPrecision;transform:scaleX(1.1000);"><span>NOV</span></div>
<div class="t" style="left:347.00px;top:154px;font-size:10.25px;font-weight:normal;font-family:'Liberation Sans';color:#808080;text-rendering:geometricPrecision;transform:scaleX(1.2381);"><span>2007</span></div>
<div class="t" style="left:501.00px;top:154px;font-size:10.25px;font-weight:normal;font-family:'Liberation Sans';color:#808080;text-rendering:geometricPrecision;transform:scaleX(1.2000);"><span>28</span></div>
<div class="t" style="left:539.90px;top:154px;font-size:10.25px;font-weight:normal;font-family:'Liberation Sans';color:#808080;text-rendering:geometricPrecision;transform:scaleX(1.1000);"><span>NOV</span></div>
<div class="t" style="left:596.00px;top:154px;font-size:10.25px;font-weight:normal;font-family:'Liberation Sans';color:#808080;text-rendering:geometricPrecision;transform:scaleX(1.2381);"><span>2008</span></div>
<div class="t" style="left:252.00px;top:197px;font-size:10.25px;font-weight:normal;font-family:'Liberation Sans';color:#808080;text-rendering:geometricPrecision;"><span>2</span></div>
<div class="t" style="left:252.00px;top:223px;font-size:10.25px;font-weight:normal;font-family:'Liberation Sans';color:#808080;text-rendering:geometricPrecision;"><span>3</span></div>
<div class="t" style="left:252.00px;top:248px;font-size:10.25px;font-weight:normal;font-family:'Liberation Sans';color:#808080;text-rendering:geometricPrecision;"><span>3</span></div>
<div class="t" style="left:499.00px;top:197px;font-size:10.25px;font-weight:normal;font-family:'Liberation Sans';color:#000;text-rendering:geometricPrecision;"><span>0</span></div>
<div class="t" style="left:499.00px;top:223px;font-size:10.25px;font-weight:normal;font-family:'Liberation Sans';color:#000;text-rendering:geometricPrecision;"><span>0</span></div>
<div class="t" style="left:499.00px;top:273px;font-size:10.25px;font-weight:normal;font-family:'Liberation Sans';color:#000;text-rendering:geometricPrecision;"><span>0</span></div>
<div class="t" style="left:252.00px;top:272px;font-size:12px;font-weight:bold;font-family:'Liberation Sans';color:#000;-webkit-text-stroke:0.3px #000;transform:scaleX(1.1143);"><span>Active</span></div>
<div class="t" style="left:248.92px;top:300px;font-size:11px;font-weight:normal;font-family:'Liberation Mono';color:#000;transform:scaleX(1.0811);"><span>343443</span></div>
<div class="t" style="left:22.50px;top:448px;font-size:10px;font-weight:normal;font-family:'Liberation Mono';color:#000;transform:scaleX(1.5000);"><span>1</span></div>
<div class="t" style="left:64.00px;top:448px;font-size:10.25px;font-weight:normal;font-family:'Liberation Sans';color:#000;text-rendering:geometricPrecision;"><span>JAN</span></div>
<div class="t" style="left:120.00px;top:448px;font-size:10.25px;font-weight:normal;font-family:'Liberation Sans';color:#000;text-rendering:geometricPrecision;transform:scaleX(1.1818);"><span>2000</span></div>
<div class="t" style="left:191.00px;top:447px;font-size:12px;font-weight:normal;font-family:'Liberation Sans';color:#808080;transform:scaleX(1.1250);text-shadow:1px 1px 0 #fff;-webkit-text-stroke:0.35px #808080;"><span>OK</span></div>
<div class="t" style="left:268.50px;top:448px;font-size:10px;font-weight:normal;font-family:'Liberation Mono';color:#000;transform:scaleX(1.5000);"><span>1</span></div>
<div class="t" style="left:310.00px;top:448px;font-size:10.25px;font-weight:normal;font-family:'Liberation Sans';color:#000;text-rendering:geometricPrecision;"><span>JAN</span></div>
<div class="t" style="left:366.00px;top:448px;font-size:10.25px;font-weight:normal;font-family:'Liberation Sans';color:#000;text-rendering:geometricPrecision;transform:scaleX(1.1818);"><span>2000</span></div>
<div class="t" style="left:437.00px;top:447px;font-size:12px;font-weight:normal;font-family:'Liberation Sans';color:#808080;transform:scaleX(1.1250);text-shadow:1px 1px 0 #fff;-webkit-text-stroke:0.35px #808080;"><span>OK</span></div>
<div class="t" style="left:498.50px;top:448px;font-size:10px;font-weight:normal;font-family:'Liberation Mono';color:#000;transform:scaleX(1.5000);"><span>1</span></div>
<div class="t" style="left:540.00px;top:448px;font-size:10.25px;font-weight:normal;font-family:'Liberation Sans';color:#000;text-rendering:geometricPrecision;"><span>JAN</span></div>
<div class="t" style="left:596.00px;top:448px;font-size:10.25px;font-weight:normal;font-family:'Liberation Sans';color:#000;text-rendering:geometricPrecision;transform:scaleX(1.1818);"><span>2000</span></div>
<div class="t" style="left:667.00px;top:447px;font-size:12px;font-weight:normal;font-family:'Liberation Sans';color:#808080;transform:scaleX(1.1250);text-shadow:1px 1px 0 #fff;-webkit-text-stroke:0.35px #808080;"><span>OK</span></div>
<div class="t" style="left:11.00px;top:490px;font-size:11px;font-weight:bold;font-family:'Liberation Sans';color:#fff;-webkit-text-stroke:0.3px #fff;transform:scaleX(1.2391);"><span>Edit Visit</span></div>
<div class="t" style="left:116.00px;top:490px;font-size:11px;font-weight:bold;font-family:'Liberation Sans';color:#fff;-webkit-text-stroke:0.3px #fff;transform:scaleX(1.2059);"><span>PM Visit Date</span></div>
<div class="t" style="left:255.00px;top:490px;font-size:11px;font-weight:bold;font-family:'Liberation Sans';color:#fff;-webkit-text-stroke:0.3px #fff;transform:scaleX(1.2174);"><span>Edit Visit</span></div>
<div class="t" style="left:363.00px;top:490px;font-size:11px;font-weight:bold;font-family:'Liberation Sans';color:#fff;-webkit-text-stroke:0.3px #fff;transform:scaleX(1.1912);"><span>BD Visit Date</span></div>
<div class="t" style="left:503.00px;top:490px;font-size:11px;font-weight:bold;font-family:'Liberation Sans';color:#fff;-webkit-text-stroke:0.3px #fff;transform:scaleX(1.2174);"><span>Edit Visit</span></div>
<div class="t" style="left:609.00px;top:490px;font-size:11px;font-weight:bold;font-family:'Liberation Sans';color:#fff;-webkit-text-stroke:0.3px #fff;transform:scaleX(1.2381);"><span>BI Visit Date</span></div>
<div class="t" style="left:8.00px;top:511px;font-size:11px;font-weight:bold;font-family:'Liberation Sans';color:#0000ff;-webkit-text-stroke:0.3px #0000ff;transform:scaleX(0.8000);"><span style="text-decoration:underline">1</span></div>
<div class="t" style="left:7.00px;top:531px;font-size:11px;font-weight:bold;font-family:'Liberation Sans';color:#0000ff;-webkit-text-stroke:0.3px #0000ff;transform:scaleX(1.2000);"><span style="text-decoration:underline">2</span></div>
<div class="t" style="left:250.00px;top:511px;font-size:11px;font-weight:bold;font-family:'Liberation Sans';color:#0000ff;-webkit-text-stroke:0.3px #0000ff;transform:scaleX(0.8000);"><span style="text-decoration:underline">1</span></div>
<div class="t" style="left:249.00px;top:531px;font-size:11px;font-weight:bold;font-family:'Liberation Sans';color:#0000ff;-webkit-text-stroke:0.3px #0000ff;transform:scaleX(1.2000);"><span style="text-decoration:underline">2</span></div>
<div class="t" style="left:499.00px;top:511px;font-size:11px;font-weight:bold;font-family:'Liberation Sans';color:#0000ff;-webkit-text-stroke:0.3px #0000ff;transform:scaleX(0.8000);"><span style="text-decoration:underline">1</span></div>
<div class="t" style="left:498.00px;top:531px;font-size:11px;font-weight:bold;font-family:'Liberation Sans';color:#0000ff;-webkit-text-stroke:0.3px #0000ff;transform:scaleX(1.2000);"><span style="text-decoration:underline">2</span></div>
<div class="t" style="left:249.00px;top:551px;font-size:11px;font-weight:bold;font-family:'Liberation Sans';color:#0000ff;-webkit-text-stroke:0.3px #0000ff;transform:scaleX(1.2000);"><span style="text-decoration:underline">3</span></div>
<div class="t" style="left:498.00px;top:551px;font-size:11px;font-weight:bold;font-family:'Liberation Sans';color:#0000ff;-webkit-text-stroke:0.3px #0000ff;transform:scaleX(1.2000);"><span style="text-decoration:underline">3</span></div>
<div class="t" style="left:114.00px;top:511px;font-size:11px;font-weight:bold;font-family:'Liberation Sans';color:#008000;-webkit-text-stroke:0.3px #008000;transform:scaleX(1.3871);"><span>29/Dec/2007</span></div>
<div class="t" style="left:115.00px;top:531px;font-size:11px;font-weight:bold;font-family:'Liberation Sans';color:#ff9900;-webkit-text-stroke:0.3px #ff9900;transform:scaleX(1.3770);"><span>13/Jun/2008</span></div>
<div class="t" style="left:361.00px;top:511px;font-size:11px;font-weight:bold;font-family:'Liberation Sans';color:#000;-webkit-text-stroke:0.3px #000;transform:scaleX(1.4098);"><span>28/Feb/2008</span></div>
<div class="t" style="left:360.00px;top:531px;font-size:11px;font-weight:bold;font-family:'Liberation Sans';color:#000;-webkit-text-stroke:0.3px #000;transform:scaleX(1.3968);"><span>29/May/2008</span></div>
<div class="t" style="left:360.00px;top:551px;font-size:11px;font-weight:bold;font-family:'Liberation Sans';color:#000;-webkit-text-stroke:0.3px #000;transform:scaleX(1.3810);"><span>28/Aug/2008</span></div>
<div class="t" style="left:605.00px;top:511px;font-size:11px;font-weight:bold;font-family:'Liberation Sans';color:#0000dd;-webkit-text-stroke:0.3px #0000dd;transform:scaleX(1.4098);"><span>28/Feb/2008</span></div>
<div class="t" style="left:604.00px;top:531px;font-size:11px;font-weight:bold;font-family:'Liberation Sans';color:#0000dd;-webkit-text-stroke:0.3px #0000dd;transform:scaleX(1.3968);"><span>29/May/2008</span></div>
<div class="t" style="left:604.00px;top:551px;font-size:11px;font-weight:bold;font-family:'Liberation Sans';color:#0000dd;-webkit-text-stroke:0.3px #0000dd;transform:scaleX(1.3810);"><span>28/Aug/2008</span></div>
</body></html>
